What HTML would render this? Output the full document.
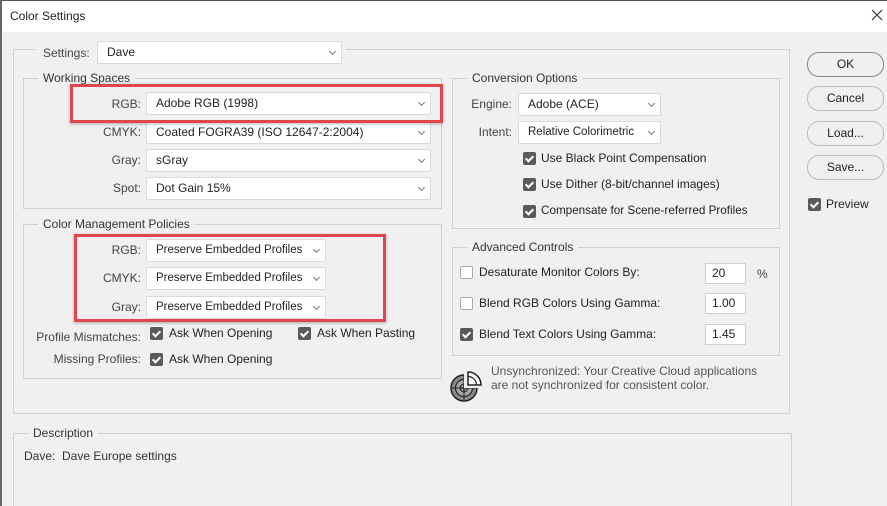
<!DOCTYPE html>
<html style="overflow:hidden;width:887px;height:506px"><head><style>
*{box-sizing:border-box;margin:0;padding:0}
body{width:887px;height:506px;background:#f0f0f0;font-family:"Liberation Sans",sans-serif;font-size:12px;color:#222;position:relative;overflow:hidden}
.a{position:absolute;white-space:nowrap}
.tb{position:absolute;left:0;top:0;width:887px;height:32px;background:#fff;border-top:1px solid #555}
.lb{position:absolute;left:0;top:0;width:2px;height:506px;background:#666}
.g{position:absolute;border:1px solid #d0d0d0}
.gl{position:absolute;background:#f0f0f0;padding:0 5px;top:-8px;left:14px;font-size:12px;color:#333}
.dd{position:absolute;background:#fff;border:1px solid #d9d9d9;border-radius:2px;height:23px;line-height:21px;padding-left:9px;font-size:12px;color:#222;overflow:hidden}
.dd:after{content:"";position:absolute;right:6px;top:7px;width:4px;height:4px;border-right:1px solid #777;border-bottom:1px solid #777;transform:rotate(45deg);background:#fff}
.r{text-align:right;color:#444;font-size:12px}
.cb{position:absolute;width:13px;height:13px;border-radius:2px;background:#5a5a5a}
.cb:after{content:"";position:absolute;left:4px;top:2px;width:3px;height:6px;border-right:2px solid #fff;border-bottom:2px solid #fff;transform:rotate(45deg)}
.cu{position:absolute;width:13px;height:13px;border-radius:2px;background:#fff;border:1px solid #aaa}
.in{position:absolute;background:#fff;border:1px solid #d0d0d0;height:21px;width:41px;line-height:19px;padding-left:6px;font-size:12px}
.bt{position:absolute;left:807px;width:77px;height:25px;border:1px solid #bbb;border-radius:12px;text-align:center;line-height:23px;font-size:12px;background:#f0f0f0}
.red{position:absolute;border:3px solid #e0474c;box-shadow:0 1px 3px rgba(0,0,0,.3)}
.t{font-size:12px}
</style></head><body>
<div class="tb"></div>
<div class="a" style="left:10px;top:9px;font-size:12px">Color Settings</div>
<svg class="a" style="left:871px;top:9px" width="12" height="12"><path d="M1 1L11 11M11 1L1 11" stroke="#333" stroke-width="1.2"/></svg>
<div class="lb"></div>

<div class="g" style="left:13px;top:49px;width:777px;height:365px;border-top:none"></div>
<div class="a" style="left:13px;top:49px;width:22px;border-top:1px solid #d0d0d0"></div>
<div class="a" style="left:346px;top:49px;width:444px;border-top:1px solid #d0d0d0"></div>
<div class="a r" style="left:43px;top:46px">Settings:</div>
<div class="dd" style="left:97px;top:41px;width:245px">Dave</div>

<div class="g" style="left:23px;top:78px;width:419px;height:131px"><div class="gl">Working Spaces</div></div>
<div class="a r" style="left:80px;top:97px;width:61px">RGB:</div>
<div class="dd" style="left:146px;top:92px;width:285px">Adobe RGB (1998)</div>
<div class="a r" style="left:80px;top:125px;width:61px">CMYK:</div>
<div class="dd" style="left:146px;top:121px;width:285px">Coated FOGRA39 (ISO 12647-2:2004)</div>
<div class="a r" style="left:80px;top:153px;width:61px">Gray:</div>
<div class="dd" style="left:146px;top:149px;width:285px">sGray</div>
<div class="a r" style="left:80px;top:181px;width:61px">Spot:</div>
<div class="dd" style="left:146px;top:177px;width:285px">Dot Gain 15%</div>
<div class="red" style="left:70px;top:84px;width:373px;height:39px"></div>

<div class="g" style="left:23px;top:224px;width:419px;height:155px"><div class="gl">Color Management Policies</div></div>
<div class="a r" style="left:80px;top:243px;width:61px">RGB:</div>
<div class="dd" style="left:146px;top:239px;width:180px;font-size:11.5px">Preserve Embedded Profiles</div>
<div class="a r" style="left:80px;top:271px;width:61px">CMYK:</div>
<div class="dd" style="left:146px;top:267px;width:180px;font-size:11.5px">Preserve Embedded Profiles</div>
<div class="a r" style="left:80px;top:300px;width:61px">Gray:</div>
<div class="dd" style="left:146px;top:296px;width:180px;font-size:11.5px">Preserve Embedded Profiles</div>
<div class="red" style="left:74px;top:234px;width:312px;height:88px"></div>
<div class="a r" style="left:20px;top:330px;width:121px">Profile Mismatches:</div>
<div class="cb" style="left:150px;top:327px"></div><div class="a t" style="left:169px;top:326px">Ask When Opening</div>
<div class="cb" style="left:298px;top:327px"></div><div class="a t" style="left:317px;top:326px">Ask When Pasting</div>
<div class="a r" style="left:20px;top:352px;width:121px">Missing Profiles:</div>
<div class="cb" style="left:150px;top:353px"></div><div class="a t" style="left:169px;top:352px">Ask When Opening</div>

<div class="g" style="left:452px;top:78px;width:328px;height:151px"><div class="gl">Conversion Options</div></div>
<div class="a r" style="left:460px;top:97px;width:52px">Engine:</div>
<div class="dd" style="left:518px;top:93px;width:143px">Adobe (ACE)</div>
<div class="a r" style="left:460px;top:125px;width:52px">Intent:</div>
<div class="dd" style="left:518px;top:121px;width:143px;font-size:11.5px">Relative Colorimetric</div>
<div class="cb" style="left:523px;top:152px"></div><div class="a t" style="left:541px;top:151px">Use Black Point Compensation</div>
<div class="cb" style="left:523px;top:178px"></div><div class="a t" style="left:541px;top:177px">Use Dither (8-bit/channel images)</div>
<div class="cb" style="left:523px;top:205px"></div><div class="a t" style="left:541px;top:204px;font-size:11.7px">Compensate for Scene-referred Profiles</div>

<div class="g" style="left:452px;top:247px;width:328px;height:109px"><div class="gl">Advanced Controls</div></div>
<div class="cu" style="left:460px;top:266px"></div><div class="a t" style="left:479px;top:265px">Desaturate Monitor Colors By:</div>
<div class="in" style="left:705px;top:263px">20</div><div class="a" style="left:757px;top:267px;color:#444">%</div>
<div class="cu" style="left:460px;top:297px"></div><div class="a t" style="left:479px;top:296px">Blend RGB Colors Using Gamma:</div>
<div class="in" style="left:705px;top:293px">1.00</div>
<div class="cb" style="left:460px;top:328px"></div><div class="a t" style="left:479px;top:327px">Blend Text Colors Using Gamma:</div>
<div class="in" style="left:705px;top:324px">1.45</div>

<svg class="a" style="left:449px;top:370px" width="34" height="34" viewBox="0 0 34 34">
<circle cx="15" cy="18" r="13" fill="#8a8a8a" stroke="#222" stroke-width="1.5"/>
<circle cx="15" cy="18" r="8.5" fill="#a8a8a8" stroke="#222" stroke-width="1.2"/>
<circle cx="15" cy="18" r="4" fill="#888" stroke="#222" stroke-width="1"/>
<line x1="2" y1="18" x2="28" y2="18" stroke="#222"/><line x1="15" y1="5" x2="15" y2="31" stroke="#222"/>
<rect x="15" y="4" width="15" height="14" fill="#f0f0f0"/>
<path d="M19 15 L19 2 A13 13 0 0 1 32 15 Z" fill="#fff" stroke="#222" stroke-width="1.5"/>
<path d="M19 6.5 A8.5 8.5 0 0 1 27.5 15" fill="none" stroke="#222" stroke-width="1.2"/>
</svg>
<div class="a" style="left:491px;top:364px;color:#555;font-size:12px;line-height:14px">Unsynchronized: Your Creative Cloud applications<br>are not synchronized for consistent color.</div>

<div class="g" style="left:13px;top:433px;width:779px;height:80px"><div class="gl" style="left:14px;color:#333">Description</div></div>
<div class="a" style="left:24px;top:449px;color:#333">Dave:&nbsp; Dave Europe settings</div>

<div class="bt" style="top:52px;border-color:#888">OK</div>
<div class="bt" style="top:86px">Cancel</div>
<div class="bt" style="top:121px">Load...</div>
<div class="bt" style="top:155px">Save...</div>
<div class="cb" style="left:808px;top:198px"></div><div class="a t" style="left:826px;top:197px">Preview</div>
</body></html>
